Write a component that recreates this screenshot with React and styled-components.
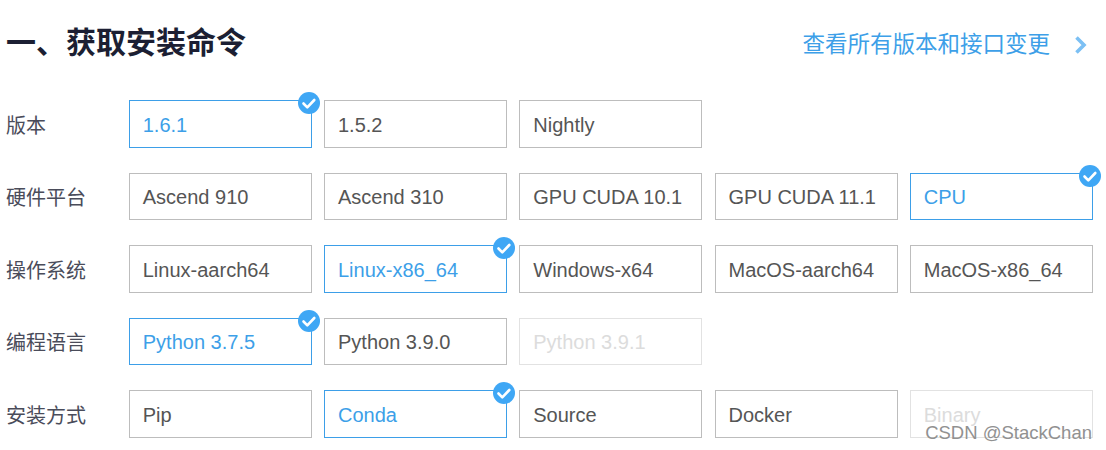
import styled, { createGlobalStyle } from "styled-components";

const SECTIONS = [
  {
    label: "版本",
    options: [
      { name: "1.6.1", selected: true },
      { name: "1.5.2" },
      { name: "Nightly" },
    ],
  },
  {
    label: "硬件平台",
    options: [
      { name: "Ascend 910" },
      { name: "Ascend 310" },
      { name: "GPU CUDA 10.1" },
      { name: "GPU CUDA 11.1" },
      { name: "CPU", selected: true },
    ],
  },
  {
    label: "操作系统",
    options: [
      { name: "Linux-aarch64" },
      { name: "Linux-x86_64", selected: true },
      { name: "Windows-x64" },
      { name: "MacOS-aarch64" },
      { name: "MacOS-x86_64" },
    ],
  },
  {
    label: "编程语言",
    options: [
      { name: "Python 3.7.5", selected: true },
      { name: "Python 3.9.0" },
      { name: "Python 3.9.1", disabled: true },
    ],
  },
  {
    label: "安装方式",
    options: [
      { name: "Pip" },
      { name: "Conda", selected: true },
      { name: "Source" },
      { name: "Docker" },
      { name: "Binary", disabled: true },
    ],
  },
];

const GlobalStyle = createGlobalStyle`
  html, body {
    margin: 0;
    padding: 0;
    background: #fff;
  }
  body {
    font-family: "Liberation Sans", "Noto Sans CJK SC", sans-serif;
  }
`;

const Page = styled.div`
  position: relative;
  width: 1106px;
  height: 450px;
  overflow: hidden;
  padding: 23px 13px 0 6px;
  box-sizing: border-box;
`;

const Header = styled.div`
  display: flex;
  justify-content: space-between;
  align-items: center;
  height: 40px;
  margin-bottom: 37px;
`;

const Title = styled.h2`
  margin: 0;
  font-size: 30px;
  line-height: 40px;
  font-weight: 700;
  color: #1c1f33;
`;

const AllVersions = styled.a`
  display: flex;
  align-items: center;
  gap: 24px;
  margin-top: 4px;
  padding-right: 6px;
  font-size: 22.5px;
  line-height: 34px;
  color: #3d9fe8;
`;

const Rows = styled.div`
  display: flex;
  flex-direction: column;
  gap: 25px;
`;

const Row = styled.div`
  display: grid;
  grid-template-columns: 110.5px repeat(5, 183px);
  column-gap: 12.25px;
  height: 47.5px;
  align-items: center;
`;

const Label = styled.div`
  font-size: 20px;
  color: #4a4c5a;
  padding-top: 1px;
`;

const Option = styled.div`
  position: relative;
  box-sizing: border-box;
  height: 47.5px;
  padding: 3px 0 0 13px;
  display: flex;
  align-items: center;
  font-size: 20px;
  border: 1px solid
    ${(p) => (p.$selected ? "#3d9fe8" : p.$disabled ? "#e2e2e2" : "#bdbdbd")};
  color: ${(p) =>
    p.$selected ? "#3d9fe8" : p.$disabled ? "#dcdcdc" : "#555555"};
`;

const Badge = styled.svg`
  position: absolute;
  top: -9px;
  right: -9px;
  width: 22px;
  height: 22px;
`;

const Watermark = styled.div`
  position: absolute;
  right: 14px;
  top: 422px;
  font-size: 18.5px;
  line-height: 22px;
  color: #919191;
`;

const CheckBadge = () => (
  <Badge viewBox="0 0 22 22">
    <circle cx="11" cy="11" r="11" fill="#3fa7f5" />
    <path
      d="M5.5 11.5l3.8 3.8 7-7.3"
      fill="none"
      stroke="#fff"
      strokeWidth="2.6"
      strokeLinecap="round"
      strokeLinejoin="round"
    />
  </Badge>
);

const Chevron = () => (
  <svg width="13" height="20" viewBox="0 0 13 20">
    <path
      d="M2.5 2.5L10 10L2.5 17.5"
      fill="none"
      stroke="#7cc0f4"
      strokeWidth="3.6"
    />
  </svg>
);

const App = () => {
  return (
    <Page>
      <GlobalStyle />
      <Header>
        <Title>一、获取安装命令</Title>
        <AllVersions>
          查看所有版本和接口变更
          <Chevron />
        </AllVersions>
      </Header>
      <Rows>
        {SECTIONS.map((section) => (
          <Row key={section.label}>
            <Label>{section.label}</Label>
            {section.options.map((option) => (
              <Option
                key={option.name}
                $selected={option.selected}
                $disabled={option.disabled}
              >
                {option.name}
                {option.selected && <CheckBadge />}
              </Option>
            ))}
          </Row>
        ))}
      </Rows>
      <Watermark>CSDN @StackChan</Watermark>
    </Page>
  );
};

export default App;
